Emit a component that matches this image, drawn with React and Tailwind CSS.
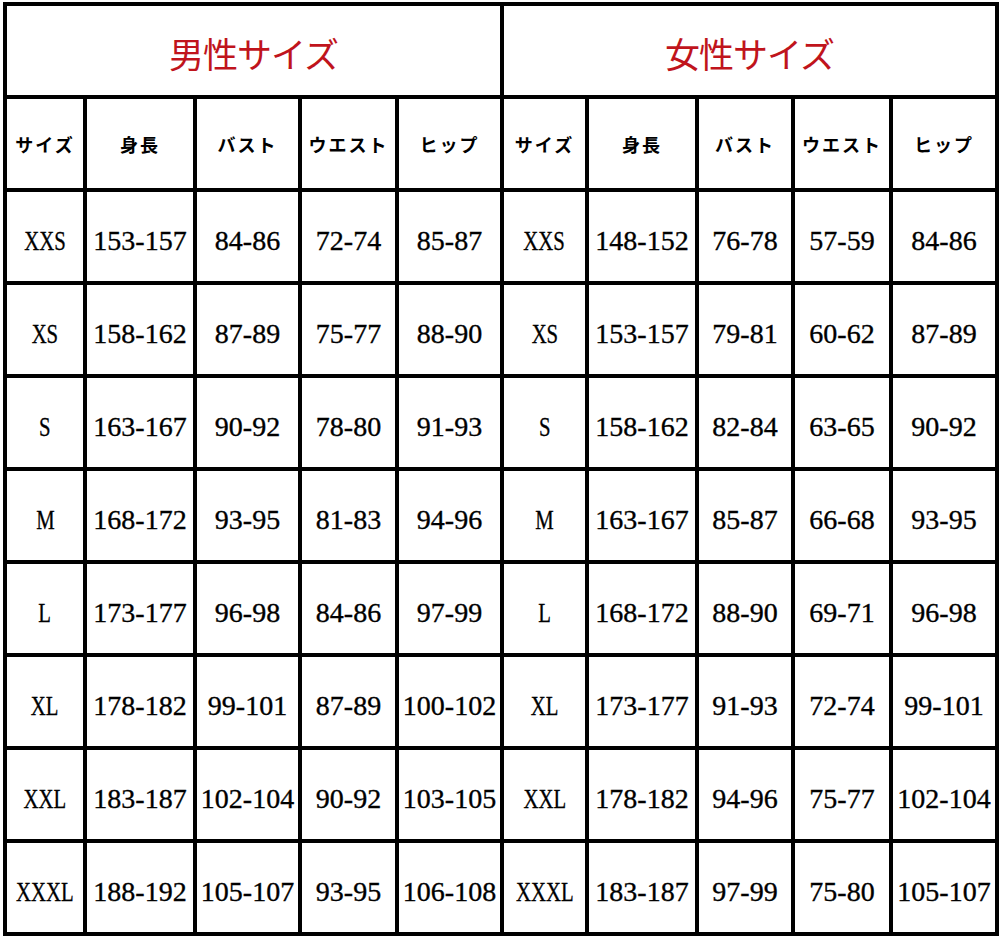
const heads = ['サイズ', '身長', 'バスト', 'ウエスト', 'ヒップ']

const men = [
  ['XXS', '153-157', '84-86', '72-74', '85-87'],
  ['XS', '158-162', '87-89', '75-77', '88-90'],
  ['S', '163-167', '90-92', '78-80', '91-93'],
  ['M', '168-172', '93-95', '81-83', '94-96'],
  ['L', '173-177', '96-98', '84-86', '97-99'],
  ['XL', '178-182', '99-101', '87-89', '100-102'],
  ['XXL', '183-187', '102-104', '90-92', '103-105'],
  ['XXXL', '188-192', '105-107', '93-95', '106-108'],
]

const women = [
  ['XXS', '148-152', '76-78', '57-59', '84-86'],
  ['XS', '153-157', '79-81', '60-62', '87-89'],
  ['S', '158-162', '82-84', '63-65', '90-92'],
  ['M', '163-167', '85-87', '66-68', '93-95'],
  ['L', '168-172', '88-90', '69-71', '96-98'],
  ['XL', '173-177', '91-93', '72-74', '99-101'],
  ['XXL', '178-182', '94-96', '75-77', '102-104'],
  ['XXXL', '183-187', '97-99', '75-80', '105-107'],
]

function Cell({ children, first }) {
  return (
    <div className="bg-white flex items-center justify-center pt-[8px] text-[28px] text-black font-['Liberation_Serif',serif] [-webkit-text-stroke:0.35px_black]">
      {first ? <span className="inline-block scale-x-[0.74]">{children}</span> : children}
    </div>
  )
}

function Title({ children }) {
  return (
    <div className="col-span-5 bg-white flex items-center justify-center pt-[6px] text-[35px] tracking-[-1px] text-[#c0141c] font-['Noto_Sans_CJK_JP',sans-serif]">
      {children}
    </div>
  )
}

export default function App() {
  return (
    <div className="bg-white w-[1000px] h-[939px] pt-[2px] pl-[3px]">
      <div className="grid grid-cols-[76px_106px_101px_93px_101px_81px_106px_92px_94px_102px] auto-rows-[89px] gap-1 p-1 bg-black w-[996px]">
        <Title>男性サイズ</Title>
        <Title>女性サイズ</Title>

        {[...heads, ...heads].map((h, i) => (
          <div key={i} className="bg-white flex items-center justify-center pt-[2px] text-[18px] font-bold tracking-[2px] text-black font-['Noto_Sans_CJK_JP',sans-serif]">
            {h}
          </div>
        ))}

        {men.map((row, r) => (
          [...row, ...women[r]].map((v, i) => (
            <Cell key={r + '-' + i} first={i % 5 === 0}>{v}</Cell>
          ))
        ))}
      </div>
    </div>
  )
}
